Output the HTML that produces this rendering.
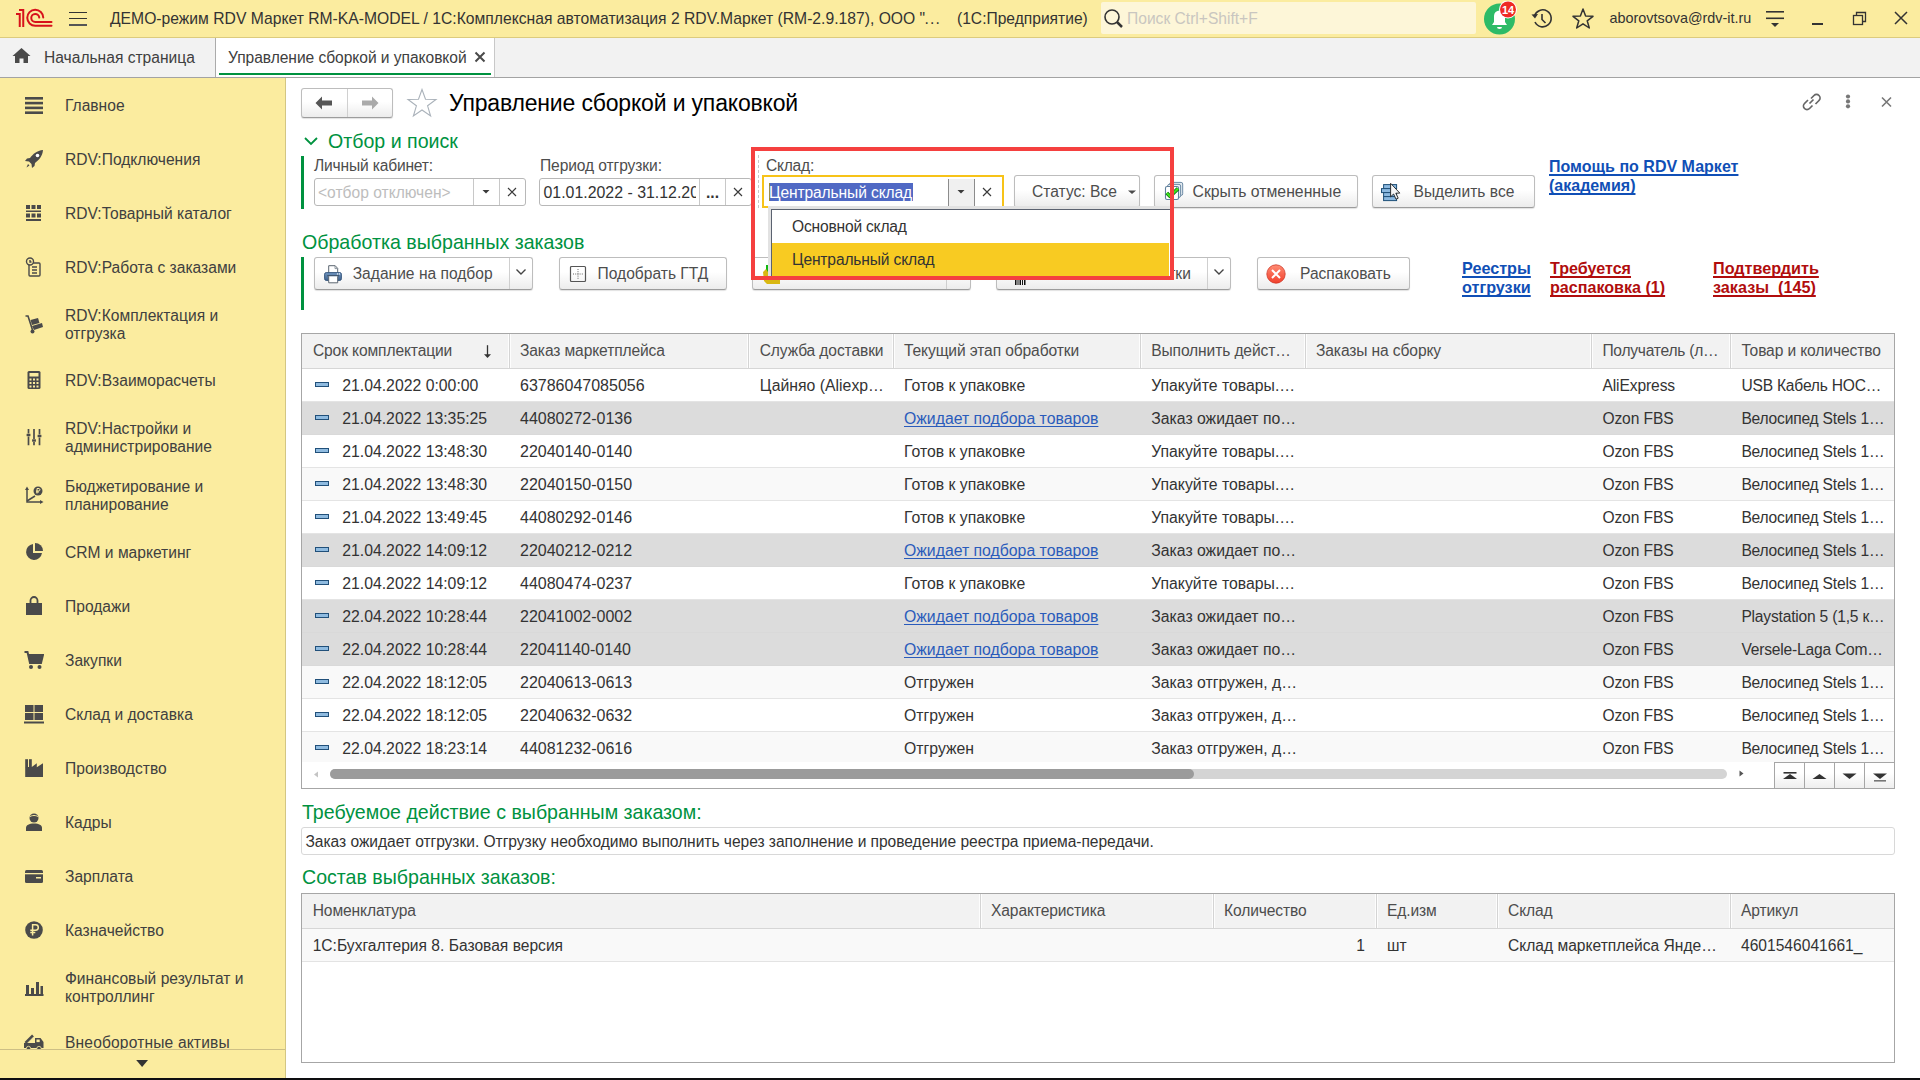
<!DOCTYPE html>
<html><head><meta charset="utf-8"><title>1C</title>
<style>
html,body{margin:0;padding:0;width:1920px;height:1080px;overflow:hidden;background:#fff;}
body{position:relative;font-family:"Liberation Sans",sans-serif;}
.t{position:absolute;white-space:pre;line-height:1;font-family:"Liberation Sans",sans-serif;}
.r{position:absolute;display:block;}
</style></head><body>
<div class="r" style="left:0px;top:0px;width:1920px;height:37px;background:#fbec9f"></div>
<div class="r" style="left:0px;top:37px;width:1920px;height:1px;background:#dccb7e"></div>
<svg class="r" style="left:12px;top:5px;" width="45" height="27" viewBox="0 0 45 27">
<g stroke="#d7121b" stroke-width="2" fill="none">
<path d="M4 9 H7.75 V22"/>
<path d="M7 5 H11.25 V22"/>
<path d="M31.25 12.6 A8 8 0 1 0 23.25 20.75 H39.5" stroke-linecap="round"/>
<path d="M27.25 12.6 A4 4 0 1 0 23.25 16.9 H39.5" stroke-linecap="round"/>
</g>
</svg>
<div class="r" style="left:69px;top:11.5px;width:18px;height:1.6px;background:#333"></div>
<div class="r" style="left:69px;top:17.7px;width:18px;height:1.6px;background:#333"></div>
<div class="r" style="left:69px;top:24px;width:18px;height:1.8px;background:#555"></div>
<div class="t " style="left:110px;top:11px;font-size:15.7px;color:#333;font-weight:normal;">ДЕМО-режим RDV Маркет RM-KA-MODEL / 1С:Комплексная автоматизация 2 RDV.Маркет (RM-2.9.187), ООО &quot;</div>
<div class="t " style="left:924.6px;top:11px;font-size:15.7px;color:#333;font-weight:normal;letter-spacing:1.05px;">...</div>
<div class="t " style="left:957px;top:11px;font-size:15.6px;color:#333;font-weight:normal;">(1С:Предприятие)</div>
<div class="r" style="left:1101px;top:2px;width:375px;height:32px;background:#fdf6d8;border-radius:2px"></div>
<svg class="r" style="left:1103px;top:8px;" width="22" height="22" viewBox="0 0 22 22"><circle cx="9" cy="9" r="7" stroke="#333" stroke-width="1.6" fill="none"/><path d="M14 14 L19 19" stroke="#333" stroke-width="2.5"/></svg>
<div class="t " style="left:1127px;top:11px;font-size:15.6px;color:#c9c6c0;font-weight:normal;">Поиск Ctrl+Shift+F</div>
<svg class="r" style="left:1482px;top:1px;" width="40" height="36" viewBox="0 0 40 36">
<circle cx="17.5" cy="18" r="15.5" fill="#2dbb67"/>
<path d="M10 24 L25 24 L23 21 L23 15 A5.5 5.5 0 0 0 12 15 L12 21 Z" fill="#fff"/>
<path d="M15 26 A2.5 2 0 0 0 20 26 Z" fill="#fff"/>
<circle cx="26" cy="8.5" r="9" fill="#fff"/>
<circle cx="26" cy="8.5" r="8" fill="#ee2a24"/>
<text x="26" y="12.5" font-family="Liberation Sans" font-size="11" font-weight="bold" fill="#fff" text-anchor="middle">14</text>
</svg>
<svg class="r" style="left:1530px;top:7px;" width="24" height="24" viewBox="0 0 24 24"><path d="M4.5 9 A8.5 8.5 0 1 1 5 15" stroke="#333" stroke-width="1.6" fill="none"/><path d="M1.5 7.5 L5 11.5 L8 7" fill="#333"/><path d="M12 7 V12.5 L15.5 16" stroke="#333" stroke-width="1.6" fill="none"/></svg>
<svg class="r" style="left:1571px;top:7px;" width="24" height="24" viewBox="0 0 24 24"><path d="M12 2 L14.6 9 L22 9.3 L16.2 13.8 L18.3 21 L12 16.8 L5.7 21 L7.8 13.8 L2 9.3 L9.4 9 Z" stroke="#333" stroke-width="1.5" fill="none" stroke-linejoin="round"/></svg>
<div class="t " style="left:1609.5px;top:11px;font-size:14.4px;color:#333;font-weight:normal;">aborovtsova@rdv-it.ru</div>
<svg class="r" style="left:1764px;top:8px;" width="22" height="22" viewBox="0 0 22 22"><rect x="2" y="3" width="18" height="1.6" fill="#333"/><rect x="2" y="9.5" width="18" height="1.6" fill="#333"/><path d="M7 15 H15 L11 19 Z" fill="#333"/></svg>
<div class="r" style="left:1812px;top:23px;width:11px;height:1.5px;background:#333"></div>
<svg class="r" style="left:1852px;top:11px;" width="16" height="16" viewBox="0 0 16 16"><rect x="1.5" y="4.5" width="9" height="9" stroke="#333" stroke-width="1.3" fill="none"/><path d="M4.5 4.5 V1.5 H13.5 V10.5 H10.5" stroke="#333" stroke-width="1.3" fill="none"/></svg>
<svg class="r" style="left:1893px;top:10px;" width="16" height="16" viewBox="0 0 16 16"><path d="M2 2 L14 14 M14 2 L2 14" stroke="#333" stroke-width="1.5"/></svg>
<div class="r" style="left:0px;top:38px;width:1920px;height:39px;background:#f2f2f2"></div>
<div class="r" style="left:0px;top:77px;width:1920px;height:1px;background:#a3a3a3"></div>
<svg class="r" style="left:11px;top:46px;" width="22" height="20" viewBox="0 0 22 20"><path d="M1.5 10 L10.5 2 L19.5 10 L17 10 L17 17 L12.5 17 L12.5 12.5 L8.5 12.5 L8.5 17 L4 17 L4 10 Z" fill="#4a4a4a"/></svg>
<div class="t " style="left:44px;top:50px;font-size:15.6px;color:#404040;font-weight:normal;">Начальная страница</div>
<div class="r" style="left:215px;top:38px;width:280px;height:39px;background:#fff;border-left:1px solid #ababab;border-right:1px solid #c8c8c8;box-sizing:border-box"></div>
<div class="r" style="left:219px;top:73px;width:272px;height:2px;background:#00923f"></div>
<div class="t " style="left:228px;top:50px;font-size:15.6px;color:#404040;font-weight:normal;letter-spacing:-0.05px;">Управление сборкой и упаковкой</div>
<svg class="r" style="left:474px;top:51px;" width="12" height="12" viewBox="0 0 12 12"><path d="M1.5 1.5 L10.5 10.5 M10.5 1.5 L1.5 10.5" stroke="#4a4a4a" stroke-width="2"/></svg>
<div class="r" style="left:0px;top:78px;width:285px;height:1000px;background:#fbec9f"></div>
<div class="r" style="left:285px;top:78px;width:1px;height:1000px;background:#d3c683"></div>
<div class="r" style="left:0px;top:1049px;width:285px;height:1px;background:#cdbf85"></div>
<svg class="r" style="left:135px;top:1059px;" width="16" height="10" viewBox="0 0 16 10"><path d="M1.2 1 H13 L7.1 8 Z" fill="#333"/></svg>
<div class="r" style="left:0px;top:1078px;width:1920px;height:2px;background:#0e0e10"></div>
<svg class="r" style="left:24px;top:95px;" width="20" height="20" viewBox="0 0 20 20"><rect x="1" y="2" width="18" height="2.6" fill="#4a4a4a"/><rect x="1" y="6.8" width="18" height="2.6" fill="#4a4a4a"/><rect x="1" y="11.6" width="18" height="2.6" fill="#4a4a4a"/><rect x="1" y="16.4" width="18" height="2.6" fill="#4a4a4a"/></svg>
<div class="t " style="left:65px;top:98px;font-size:15.6px;color:#404040;font-weight:normal;">Главное</div>
<svg class="r" style="left:24px;top:149px;" width="20" height="20" viewBox="0 0 20 20"><path d="M19 1 C13 1.5 9 5 6 9 L3 9.5 L1 12 L5 12.5 L7.5 15 L8 19 L10.5 17 L11 14 C15 11 18.5 7 19 1 Z" fill="#4a4a4a"/><circle cx="13.5" cy="6.5" r="1.8" fill="#fff"/><path d="M2.5 18.5 L4 15 L5.5 16.5 Z" fill="#4a4a4a"/></svg>
<div class="t " style="left:65px;top:152px;font-size:15.6px;color:#404040;font-weight:normal;">RDV:Подключения</div>
<svg class="r" style="left:24px;top:203px;" width="20" height="20" viewBox="0 0 20 20"><g fill="#4a4a4a"><rect x="2" y="2" width="4" height="4"/><rect x="7.5" y="2" width="4" height="4"/><rect x="13" y="2" width="4" height="4"/><rect x="2" y="7.5" width="15" height="1.5"/><rect x="2" y="10.5" width="4" height="4"/><rect x="7.5" y="10.5" width="4" height="4"/><rect x="13" y="10.5" width="4" height="4"/><rect x="2" y="16" width="15" height="2"/></g></svg>
<div class="t " style="left:65px;top:206px;font-size:15.6px;color:#404040;font-weight:normal;">RDV:Товарный каталог</div>
<svg class="r" style="left:24px;top:257px;" width="20" height="20" viewBox="0 0 20 20"><g stroke="#4a4a4a" stroke-width="1.4" fill="none"><rect x="5" y="6" width="11" height="13" rx="1"/><circle cx="6" cy="4.5" r="3.5" fill="#fbec9f"/><path d="M6 3 V5 H7.5"/><path d="M8 10 H13 M8 13 H13 M8 16 H13"/></g></svg>
<div class="t " style="left:65px;top:260px;font-size:15.6px;color:#404040;font-weight:normal;">RDV:Работа с заказами</div>
<svg class="r" style="left:24px;top:314px;" width="20" height="20" viewBox="0 0 20 20"><g fill="#4a4a4a"><path d="M1.5 2 L4 2 L8.5 16" stroke="#4a4a4a" stroke-width="1.6" fill="none"/><circle cx="8.5" cy="17.5" r="2"/><path d="M8 12 L18 9 L19 13 L10 16 Z"/><path d="M6.5 6 L14 4 L15.5 9 L8 11 Z"/></g></svg>
<div class="t " style="left:65px;top:308px;font-size:15.6px;color:#404040;font-weight:normal;">RDV:Комплектация и</div>
<div class="t " style="left:65px;top:326px;font-size:15.6px;color:#404040;font-weight:normal;">отгрузка</div>
<svg class="r" style="left:24px;top:370px;" width="20" height="20" viewBox="0 0 20 20"><g fill="#4a4a4a"><rect x="3.5" y="1" width="13" height="18" rx="1.5"/></g><g fill="#fbec9f"><rect x="5.5" y="3" width="9" height="3.5"/><rect x="5.5" y="8.5" width="2" height="2"/><rect x="9" y="8.5" width="2" height="2"/><rect x="12.5" y="8.5" width="2" height="2"/><rect x="5.5" y="12" width="2" height="2"/><rect x="9" y="12" width="2" height="2"/><rect x="12.5" y="12" width="2" height="2"/><rect x="5.5" y="15.5" width="2" height="2"/><rect x="9" y="15.5" width="2" height="2"/><rect x="12.5" y="15.5" width="2" height="2"/></g></svg>
<div class="t " style="left:65px;top:373px;font-size:15.6px;color:#404040;font-weight:normal;">RDV:Взаиморасчеты</div>
<svg class="r" style="left:24px;top:427px;" width="20" height="20" viewBox="0 0 20 20"><g stroke="#4a4a4a" stroke-width="1.7"><path d="M4.5 2 V6.5 M4.5 9.5 V18.3"/><path d="M10 2 V12 M10 15 V18.3"/><path d="M15.5 2 V7.5 M15.5 10.5 V18.3"/></g><g fill="#4a4a4a"><rect x="2.6" y="6.8" width="3.8" height="2.4"/><rect x="8.1" y="12.3" width="3.8" height="2.4"/><rect x="13.6" y="7.8" width="3.8" height="2.4"/></g></svg>
<div class="t " style="left:65px;top:421px;font-size:15.6px;color:#404040;font-weight:normal;">RDV:Настройки и</div>
<div class="t " style="left:65px;top:439px;font-size:15.6px;color:#404040;font-weight:normal;">администрирование</div>
<svg class="r" style="left:24px;top:485px;" width="20" height="20" viewBox="0 0 20 20"><g stroke="#4a4a4a" stroke-width="1.5" fill="none"><path d="M3 3 V17 H18"/><path d="M3 16 L11 11"/></g><path d="M1 5 L3 1.5 L5 5 Z M16 15 L19.5 17 L16 19 Z" fill="#4a4a4a"/><circle cx="14" cy="6" r="4.5" fill="#4a4a4a"/><path d="M13 3.5 V8.5 M13 3.5 H15 A1.3 1.3 0 0 1 15 6 H12 M12 7 H15" stroke="#fbec9f" stroke-width="1" fill="none"/></svg>
<div class="t " style="left:65px;top:479px;font-size:15.6px;color:#404040;font-weight:normal;">Бюджетирование и</div>
<div class="t " style="left:65px;top:497px;font-size:15.6px;color:#404040;font-weight:normal;">планирование</div>
<svg class="r" style="left:24px;top:542px;" width="20" height="20" viewBox="0 0 20 20"><path d="M9 2 A8 8 0 1 0 18 11 L9 11 Z" fill="#4a4a4a"/><path d="M11 1 A8 8 0 0 1 19 9 L11 9 Z" fill="#4a4a4a"/></svg>
<div class="t " style="left:65px;top:545px;font-size:15.6px;color:#404040;font-weight:normal;">CRM и маркетинг</div>
<svg class="r" style="left:24px;top:596px;" width="20" height="20" viewBox="0 0 20 20"><path d="M2 7 H18 V19 H2 Z" fill="#4a4a4a"/><path d="M6.5 9 V4.5 A3.5 3.5 0 0 1 13.5 4.5 V9" stroke="#4a4a4a" stroke-width="1.8" fill="none"/></svg>
<div class="t " style="left:65px;top:599px;font-size:15.6px;color:#404040;font-weight:normal;">Продажи</div>
<svg class="r" style="left:24px;top:650px;" width="20" height="20" viewBox="0 0 20 20"><path d="M0.5 2 H3.5 L6 13 H17 L19 5 H5" stroke="#4a4a4a" stroke-width="2" fill="none"/><path d="M4.5 5 H19 L17 12 H6 Z" fill="#4a4a4a"/><circle cx="7" cy="17" r="2" fill="#4a4a4a"/><circle cx="15.5" cy="17" r="2" fill="#4a4a4a"/></svg>
<div class="t " style="left:65px;top:653px;font-size:15.6px;color:#404040;font-weight:normal;">Закупки</div>
<svg class="r" style="left:24px;top:704px;" width="20" height="20" viewBox="0 0 20 20"><g fill="#4a4a4a"><rect x="1" y="1" width="8.5" height="7"/><rect x="10.5" y="1" width="8.5" height="7"/><rect x="1" y="9" width="8.5" height="7"/><rect x="10.5" y="9" width="8.5" height="7"/><rect x="0" y="17.5" width="20" height="2"/></g></svg>
<div class="t " style="left:65px;top:707px;font-size:15.6px;color:#404040;font-weight:normal;">Склад и доставка</div>
<svg class="r" style="left:24px;top:758px;" width="20" height="20" viewBox="0 0 20 20"><g fill="#4a4a4a"><rect x="1.2" y="1.2" width="2.8" height="8"/><rect x="5" y="1.2" width="2.8" height="8"/><path d="M1.2 9 H7.8 L12.8 5.2 V9.2 L19 5.2 V19 H1.2 Z"/></g></svg>
<div class="t " style="left:65px;top:761px;font-size:15.6px;color:#404040;font-weight:normal;">Производство</div>
<svg class="r" style="left:24px;top:812px;" width="20" height="20" viewBox="0 0 20 20"><circle cx="10" cy="6" r="4.5" fill="#4a4a4a"/><path d="M2 19 V16 C2 13 5 11.5 10 11.5 C15 11.5 18 13 18 16 V19 Z" fill="#4a4a4a"/><path d="M6 5 C7 3 13 3 14 5" stroke="#fbec9f" stroke-width="1" fill="none"/></svg>
<div class="t " style="left:65px;top:815px;font-size:15.6px;color:#404040;font-weight:normal;">Кадры</div>
<svg class="r" style="left:24px;top:866px;" width="20" height="20" viewBox="0 0 20 20"><rect x="1" y="4" width="18" height="13" rx="1.5" fill="#4a4a4a"/><rect x="1" y="7" width="18" height="1.3" fill="#fbec9f"/><rect x="12" y="11" width="5" height="1.5" fill="#fbec9f"/></svg>
<div class="t " style="left:65px;top:869px;font-size:15.6px;color:#404040;font-weight:normal;">Зарплата</div>
<svg class="r" style="left:24px;top:920px;" width="20" height="20" viewBox="0 0 20 20"><circle cx="10" cy="10" r="8.8" fill="#4a4a4a"/><path d="M8.6 15.5 V4.8 H11.6 A2.7 2.7 0 0 1 11.6 10.2 H6.3 M6.3 12.6 H11.3" stroke="#fbec9f" stroke-width="1.5" fill="none"/></svg>
<div class="t " style="left:65px;top:923px;font-size:15.6px;color:#404040;font-weight:normal;">Казначейство</div>
<svg class="r" style="left:24px;top:977px;" width="20" height="20" viewBox="0 0 20 20"><g fill="#4a4a4a"><rect x="2" y="8" width="3" height="9"/><rect x="7" y="11" width="3" height="6"/><rect x="12" y="5" width="3" height="12"/><rect x="16.5" y="9" width="2.5" height="8"/><rect x="1" y="17" width="18.5" height="2"/></g></svg>
<div class="t " style="left:65px;top:971px;font-size:15.6px;color:#404040;font-weight:normal;">Финансовый результат и</div>
<div class="t " style="left:65px;top:989px;font-size:15.6px;color:#404040;font-weight:normal;">контроллинг</div>
<div class="r" style="left:0;top:1030px;width:285px;height:19px;overflow:hidden">
<svg class="r" style="left:24px;top:2px;" width="20" height="20" viewBox="0 0 20 20"><path d="M1.5 11 L9 3.5" stroke="#4a4a4a" stroke-width="2.6"/><path d="M2.5 11.5 L9.5 4.5" stroke="#8a8a7a" stroke-width="0.8"/><path d="M0 11 H11 V6 H16.5 L19.5 10 V16 H0 Z" fill="#4a4a4a"/><rect x="12.5" y="7.5" width="3.2" height="2.6" fill="#fbec9f"/><circle cx="4.5" cy="16.5" r="2.2" fill="#4a4a4a" stroke="#fbec9f" stroke-width="0.8"/><circle cx="15" cy="16.5" r="2.2" fill="#4a4a4a" stroke="#fbec9f" stroke-width="0.8"/></svg>
<div class="t " style="left:65px;top:5px;font-size:15.6px;color:#404040;font-weight:normal;letter-spacing:0.15px;">Внеоборотные активы</div>
</div>
<div class="r" style="left:286px;top:78px;width:1634px;height:1000px;background:#fff"></div>
<div class="r" style="left:301px;top:88px;width:92px;height:30px;box-sizing:border-box;border:1px solid #bdbdbd;border-bottom-color:#9c9c9c;border-radius:3px;background:linear-gradient(#ffffff 0%,#ffffff 45%,#ececec 100%);box-shadow:0 1px 1px rgba(0,0,0,0.12);"></div>
<div class="r" style="left:347px;top:89px;width:1px;height:28px;background:#d0d0d0"></div>
<svg class="r" style="left:314px;top:95px;" width="20" height="16" viewBox="0 0 20 16"><path d="M1.5 8 L8 1.5 L8 5.5 L18 5.5 L18 10.5 L8 10.5 L8 14.5 Z" fill="#555"/></svg>
<svg class="r" style="left:360px;top:95px;" width="20" height="16" viewBox="0 0 20 16"><path d="M18.5 8 L12 1.5 L12 5.5 L2 5.5 L2 10.5 L12 10.5 L12 14.5 Z" fill="#aaa"/></svg>
<svg class="r" style="left:406px;top:88px;" width="32" height="30" viewBox="0 0 32 30"><path d="M16 1.5 L19.5 11.3 L30 11.5 L21.6 17.8 L24.6 28 L16 22 L7.4 28 L10.4 17.8 L2 11.5 L12.5 11.3 Z" stroke="#aab2ba" stroke-width="1.1" fill="none" stroke-linejoin="miter"/></svg>
<div class="t " style="left:449px;top:92px;font-size:23px;color:#000;font-weight:normal;letter-spacing:-0.17px;">Управление сборкой и упаковкой</div>
<svg class="r" style="left:1800px;top:91px;" width="23" height="22" viewBox="0 0 23 22"><path d="M9.5 12.5 L13.5 8.5" stroke="#666" stroke-width="1.7"/><path d="M8 9 L4.5 12.5 A3.3 3.3 0 0 0 9.5 17.5 L12.5 14.5" stroke="#666" stroke-width="1.7" fill="none"/><path d="M11 7.5 L14 4.5 A3.3 3.3 0 0 1 19 9.5 L15.5 13" stroke="#666" stroke-width="1.7" fill="none"/></svg>
<svg class="r" style="left:1844px;top:92px;" width="8" height="20" viewBox="0 0 8 20"><circle cx="4" cy="4.5" r="2.1" fill="#777"/><circle cx="4" cy="9.4" r="2.1" fill="#777"/><circle cx="4" cy="14.3" r="2.1" fill="#777"/></svg>
<svg class="r" style="left:1880px;top:95px;" width="14" height="14" viewBox="0 0 14 14"><path d="M2 2.5 L11 11.5 M11 2.5 L2 11.5" stroke="#777" stroke-width="1.6"/></svg>
<svg class="r" style="left:302px;top:134px;" width="18" height="14" viewBox="0 0 18 14"><path d="M3 4 L9 10 L15 4" stroke="#00923f" stroke-width="1.8" fill="none"/></svg>
<div class="t " style="left:328px;top:132px;font-size:19.6px;color:#00923f;font-weight:normal;transform:scaleY(1.07);transform-origin:0 16px;">Отбор и поиск</div>
<div class="r" style="left:301px;top:156px;width:3px;height:53px;background:#00923f"></div>
<div class="t " style="left:314px;top:158px;font-size:15.6px;color:#4d4d4d;font-weight:normal;letter-spacing:-0.18px;">Личный кабинет:</div>
<div class="r" style="left:314px;top:178px;width:212px;height:28px;box-sizing:border-box;border:1px solid #b8b8b8;border-radius:3px;background:#fff"></div>
<div class="r" style="left:473px;top:179px;width:1px;height:26px;background:#c8c8c8"></div>
<div class="r" style="left:499px;top:179px;width:1px;height:26px;background:#c8c8c8"></div>
<div class="t " style="left:318px;top:185px;font-size:15.6px;color:#bdbdbd;font-weight:normal;">&lt;отбор отключен&gt;</div>
<svg class="r" style="left:481px;top:189px;" width="10" height="6" viewBox="0 0 10 6"><path d="M1.5 1 H8.5 L5 4.5 Z" fill="#3a3a3a"/></svg>
<svg class="r" style="left:506px;top:186px;" width="12" height="12" viewBox="0 0 12 12"><path d="M2 2 L10 10 M10 2 L2 10" stroke="#3a3a3a" stroke-width="1.15"/></svg>
<div class="t " style="left:540px;top:158px;font-size:15.6px;color:#4d4d4d;font-weight:normal;letter-spacing:-0.1px;">Период отгрузки:</div>
<div class="r" style="left:539px;top:178px;width:213px;height:28px;box-sizing:border-box;border:1px solid #b8b8b8;border-radius:3px;background:#fff"></div>
<div class="r" style="left:699px;top:179px;width:1px;height:26px;background:#c8c8c8"></div>
<div class="r" style="left:725px;top:179px;width:1px;height:26px;background:#c8c8c8"></div>
<div class="r" style="left:542px;top:179px;width:154px;height:26px;overflow:hidden">
<div class="t " style="left:1.5px;top:6px;font-size:15.9px;color:#333;font-weight:normal;">01.01.2022 - 31.12.2022</div>
</div>
<div class="t " style="left:706px;top:185px;font-size:15.6px;color:#333;font-weight:bold;">...</div>
<svg class="r" style="left:732px;top:186px;" width="12" height="12" viewBox="0 0 12 12"><path d="M2 2 L10 10 M10 2 L2 10" stroke="#3a3a3a" stroke-width="1.15"/></svg>
<div class="r" style="left:758px;top:155px;width:1px;height:53px;background:repeating-linear-gradient(#c8c8c8 0 3px, transparent 3px 5px)"></div>
<div class="t " style="left:766px;top:158px;font-size:15.6px;color:#4d4d4d;font-weight:normal;letter-spacing:-0.25px;">Склад:</div>
<div class="r" style="left:762px;top:175px;width:242px;height:33px;box-sizing:border-box;border:2px solid #f7c318;background:#fff"></div>
<div class="r" style="left:948px;top:179px;width:27px;height:27px;background:#f0f0f0;border-left:1px solid #8c8c8c;border-right:1px solid #8c8c8c;box-sizing:border-box"></div>
<div class="r" style="left:769px;top:183px;width:144px;height:18px;background:#5069c4"></div>
<div class="r" style="left:769px;top:183px;width:1px;height:18px;background:#9a8a30"></div>
<div class="t " style="left:769px;top:185px;font-size:15.6px;color:#fff;font-weight:normal;letter-spacing:-0.12px;">Центральный склад</div>
<svg class="r" style="left:956px;top:189px;" width="10" height="6" viewBox="0 0 10 6"><path d="M1.5 1 H8.5 L5 4.5 Z" fill="#3a3a3a"/></svg>
<svg class="r" style="left:981px;top:186px;" width="12" height="12" viewBox="0 0 12 12"><path d="M2 2 L10 10 M10 2 L2 10" stroke="#3a3a3a" stroke-width="1.15"/></svg>
<div class="r" style="left:1014px;top:175px;width:126px;height:33px;box-sizing:border-box;border:1px solid #bdbdbd;border-bottom-color:#9c9c9c;border-radius:3px;background:linear-gradient(#ffffff 0%,#ffffff 45%,#ececec 100%);box-shadow:0 1px 1px rgba(0,0,0,0.12);"></div>
<div class="t " style="left:1032px;top:184px;font-size:15.6px;color:#4d4d4d;font-weight:normal;">Статус: Все</div>
<svg class="r" style="left:1127px;top:190px;" width="10" height="5" viewBox="0 0 10 5"><path d="M1 0.5 H9 L5 4 Z" fill="#4a4a4a"/></svg>
<div class="r" style="left:1154px;top:175px;width:204px;height:33px;box-sizing:border-box;border:1px solid #bdbdbd;border-bottom-color:#9c9c9c;border-radius:3px;background:linear-gradient(#ffffff 0%,#ffffff 45%,#ececec 100%);box-shadow:0 1px 1px rgba(0,0,0,0.12);"></div>
<svg class="r" style="left:1163px;top:180px;" width="22" height="22" viewBox="0 0 22 22"><rect x="6.7" y="2.4" width="13" height="13" rx="1.6" fill="#e2e9ef" stroke="#6d8ba5" stroke-width="1"/><rect x="4.6" y="4.4" width="13" height="13" rx="1.6" fill="#eef2f6" stroke="#6d8ba5" stroke-width="1"/><rect x="2.5" y="6.5" width="13" height="13" rx="1.6" fill="#fff" stroke="#5f7f9c" stroke-width="1.1"/><path d="M3.8 13 L7 16.3 L15 8.6" stroke="#0d6d10" stroke-width="3.8" fill="none" stroke-linejoin="round"/><path d="M3.8 13 L7 16.3 L15 8.6" stroke="#3fe11c" stroke-width="2.2" fill="none" stroke-linejoin="round"/></svg>
<div class="t " style="left:1192.5px;top:184px;font-size:15.8px;color:#4d4d4d;font-weight:normal;">Скрыть отмененные</div>
<div class="r" style="left:1372px;top:175px;width:163px;height:33px;box-sizing:border-box;border:1px solid #bdbdbd;border-bottom-color:#9c9c9c;border-radius:3px;background:linear-gradient(#ffffff 0%,#ffffff 45%,#ececec 100%);box-shadow:0 1px 1px rgba(0,0,0,0.12);"></div>
<svg class="r" style="left:1379px;top:180px;" width="24" height="24" viewBox="0 0 24 24"><g fill="#8cb9e0" stroke="#1d4f78" stroke-width="1"><rect x="4.6" y="4.6" width="13" height="4"/><rect x="2.5" y="8.6" width="10" height="4"/><rect x="4.6" y="12.6" width="13" height="4"/><rect x="4.6" y="16.6" width="13" height="4"/></g><path d="M11.6 3.3 L11.6 16.8 L14.6 14 L17 19.2 L19.2 18.2 L16.8 13.2 L20.8 13.1 Z" fill="#f6f6f6" stroke="#1e1e1e" stroke-width="0.9" stroke-linejoin="round"/></svg>
<div class="t " style="left:1413.5px;top:184px;font-size:15.6px;color:#4d4d4d;font-weight:normal;">Выделить все</div>
<div class="t " style="left:1549px;top:158px;font-size:16.05px;color:#104fb6;font-weight:bold;text-decoration:underline;text-decoration-skip-ink:none;text-decoration-thickness:2px;text-underline-offset:2px">Помощь по RDV Маркет</div>
<div class="t " style="left:1549px;top:177px;font-size:16.05px;color:#104fb6;font-weight:bold;text-decoration:underline;text-decoration-skip-ink:none;text-decoration-thickness:2px;text-underline-offset:2px">(академия)</div>
<div class="t " style="left:302px;top:233px;font-size:19.6px;color:#00923f;font-weight:normal;transform:scaleY(1.07);transform-origin:0 16px;">Обработка выбранных заказов</div>
<div class="r" style="left:301px;top:257px;width:3px;height:53px;background:#00923f"></div>
<div class="r" style="left:314px;top:257px;width:219px;height:33px;box-sizing:border-box;border:1px solid #bdbdbd;border-bottom-color:#9c9c9c;border-radius:3px;background:linear-gradient(#ffffff 0%,#ffffff 45%,#ececec 100%);box-shadow:0 1px 1px rgba(0,0,0,0.12);"></div>
<div class="r" style="left:509px;top:258px;width:1px;height:31px;background:#cfcfcf"></div>
<svg class="r" style="left:322px;top:263px;" width="22" height="22" viewBox="0 0 22 22"><defs><linearGradient id="pg" x1="0" y1="0" x2="0" y2="1"><stop offset="0" stop-color="#7196c0"/><stop offset="1" stop-color="#3f618b"/></linearGradient></defs><path d="M6.7 9.5 V2.7 H13.2 L15.7 5.4 V9.5" fill="#fff" stroke="#5c6670" stroke-width="1"/><path d="M13 2.8 V5.6 H15.6" fill="none" stroke="#7f8a95" stroke-width="0.9"/><rect x="2.6" y="9.6" width="16.8" height="7.8" rx="1.6" fill="url(#pg)" stroke="#2c4f78" stroke-width="0.9"/><rect x="5.2" y="12.2" width="12" height="1.1" fill="#3a4d62"/><circle cx="15.5" cy="10.9" r="0.7" fill="#fff"/><circle cx="17.5" cy="10.9" r="0.7" fill="#fff"/><path d="M6.7 13.3 V19.8 H15.7 V13.3" fill="#fff" stroke="#5c6670" stroke-width="1"/></svg>
<div class="t " style="left:352.7px;top:266px;font-size:15.6px;color:#4d4d4d;font-weight:normal;">Задание на подбор</div>
<svg class="r" style="left:515px;top:268px;" width="12" height="8" viewBox="0 0 12 8"><path d="M1.5 1.5 L6 6 L10.5 1.5" stroke="#444" stroke-width="1.4" fill="none"/></svg>
<div class="r" style="left:559px;top:257px;width:168px;height:33px;box-sizing:border-box;border:1px solid #bdbdbd;border-bottom-color:#9c9c9c;border-radius:3px;background:linear-gradient(#ffffff 0%,#ffffff 45%,#ececec 100%);box-shadow:0 1px 1px rgba(0,0,0,0.12);"></div>
<svg class="r" style="left:569px;top:265px;" width="18" height="18" viewBox="0 0 18 18"><rect x="1.5" y="1.5" width="15" height="15" rx="1" fill="none" stroke="#555" stroke-width="1.2"/><path d="M9 4 V14 M4 9 H14" stroke="#666" stroke-width="1" stroke-dasharray="1 1.2"/></svg>
<div class="t " style="left:597.5px;top:266px;font-size:15.6px;color:#4d4d4d;font-weight:normal;">Подобрать ГТД</div>
<div class="r" style="left:752px;top:257px;width:219px;height:33px;box-sizing:border-box;border:1px solid #bdbdbd;border-bottom-color:#9c9c9c;border-radius:3px;background:linear-gradient(#ffffff 0%,#ffffff 45%,#ececec 100%);box-shadow:0 1px 1px rgba(0,0,0,0.12);"></div>
<div class="r" style="left:946px;top:258px;width:1px;height:31px;background:#cfcfcf"></div>
<svg class="r" style="left:762px;top:262px;" width="22" height="24" viewBox="0 0 22 24"><rect x="4" y="3" width="2.4" height="9" fill="#11b811"/><path d="M1 10 L4 7 L6 10 V18 H18 V22 H5 L2 19 Z" fill="#d9b812"/></svg>
<div class="r" style="left:996px;top:257px;width:235px;height:33px;box-sizing:border-box;border:1px solid #bdbdbd;border-bottom-color:#9c9c9c;border-radius:3px;background:linear-gradient(#ffffff 0%,#ffffff 45%,#ececec 100%);box-shadow:0 1px 1px rgba(0,0,0,0.12);"></div>
<div class="r" style="left:1207px;top:258px;width:1px;height:31px;background:#cfcfcf"></div>
<svg class="r" style="left:1006px;top:270px;" width="22" height="16" viewBox="0 0 22 16"><path d="M1 1 L9 8 L1 8 Z" fill="#c9a53a"/><g fill="#111"><rect x="9" y="10" width="1.5" height="5"/><rect x="11.5" y="10" width="1" height="5"/><rect x="13.5" y="10" width="1.5" height="5"/><rect x="16" y="10" width="1" height="5"/><rect x="18" y="10" width="1.5" height="5"/></g></svg>
<div class="t " style="left:1126px;top:266px;font-size:15.6px;color:#4d4d4d;font-weight:normal;">Этикетки</div>
<svg class="r" style="left:1213px;top:268px;" width="12" height="8" viewBox="0 0 12 8"><path d="M1.5 1.5 L6 6 L10.5 1.5" stroke="#444" stroke-width="1.4" fill="none"/></svg>
<div class="r" style="left:1257px;top:257px;width:153px;height:33px;box-sizing:border-box;border:1px solid #bdbdbd;border-bottom-color:#9c9c9c;border-radius:3px;background:linear-gradient(#ffffff 0%,#ffffff 45%,#ececec 100%);box-shadow:0 1px 1px rgba(0,0,0,0.12);"></div>
<svg class="r" style="left:1265px;top:263px;" width="22" height="22" viewBox="0 0 22 22"><defs><linearGradient id="rg" x1="0" y1="0" x2="0" y2="1"><stop offset="0" stop-color="#ff8c74"/><stop offset="1" stop-color="#f2402c"/></linearGradient></defs><circle cx="11" cy="11" r="9.2" fill="url(#rg)" stroke="#cf3a2a" stroke-width="0.8"/><path d="M7 7 L15 15 M15 7 L7 15" stroke="#fff" stroke-width="2"/></svg>
<div class="t " style="left:1300px;top:266px;font-size:15.6px;color:#4d4d4d;font-weight:normal;">Распаковать</div>
<div class="t " style="left:1462px;top:260px;font-size:16.2px;color:#104fb6;font-weight:bold;text-decoration:underline;text-decoration-skip-ink:none;text-decoration-thickness:2px;text-underline-offset:2px">Реестры</div>
<div class="t " style="left:1462px;top:279px;font-size:16.2px;color:#104fb6;font-weight:bold;text-decoration:underline;text-decoration-skip-ink:none;text-decoration-thickness:2px;text-underline-offset:2px">отгрузки</div>
<div class="t " style="left:1550px;top:260px;font-size:16.1px;color:#b10d0d;font-weight:bold;text-decoration:underline;text-decoration-skip-ink:none;text-decoration-thickness:2px;text-underline-offset:2px">Требуется</div>
<div class="t " style="left:1550px;top:279px;font-size:16.1px;color:#b10d0d;font-weight:bold;text-decoration:underline;text-decoration-skip-ink:none;text-decoration-thickness:2px;text-underline-offset:2px">распаковка (1)</div>
<div class="t " style="left:1713px;top:260px;font-size:16.2px;color:#b10d0d;font-weight:bold;text-decoration:underline;text-decoration-skip-ink:none;text-decoration-thickness:2px;text-underline-offset:2px">Подтвердить</div>
<div class="t " style="left:1713px;top:279px;font-size:16.2px;color:#b10d0d;font-weight:bold;text-decoration:underline;text-decoration-skip-ink:none;text-decoration-thickness:2px;text-underline-offset:2px">заказы  (145)</div>
<div class="r" style="left:301px;top:333px;width:1594px;height:456px;box-sizing:border-box;border:1px solid #a6a6a6;background:#fff"></div>
<div class="r" style="left:302px;top:334px;width:1592px;height:34px;background:#f2f2f2"></div>
<div class="r" style="left:302px;top:368px;width:1592px;height:1px;background:#d6d6d6"></div>
<div class="r" style="left:508px;top:334px;width:1px;height:34px;background:#fdfdfd"></div>
<div class="r" style="left:509px;top:334px;width:1px;height:34px;background:#d4d4d4"></div>
<div class="r" style="left:510px;top:334px;width:1px;height:34px;background:#fdfdfd"></div>
<div class="r" style="left:747px;top:334px;width:1px;height:34px;background:#fdfdfd"></div>
<div class="r" style="left:748px;top:334px;width:1px;height:34px;background:#d4d4d4"></div>
<div class="r" style="left:749px;top:334px;width:1px;height:34px;background:#fdfdfd"></div>
<div class="r" style="left:892px;top:334px;width:1px;height:34px;background:#fdfdfd"></div>
<div class="r" style="left:893px;top:334px;width:1px;height:34px;background:#d4d4d4"></div>
<div class="r" style="left:894px;top:334px;width:1px;height:34px;background:#fdfdfd"></div>
<div class="r" style="left:1139px;top:334px;width:1px;height:34px;background:#fdfdfd"></div>
<div class="r" style="left:1140px;top:334px;width:1px;height:34px;background:#d4d4d4"></div>
<div class="r" style="left:1141px;top:334px;width:1px;height:34px;background:#fdfdfd"></div>
<div class="r" style="left:1304px;top:334px;width:1px;height:34px;background:#fdfdfd"></div>
<div class="r" style="left:1305px;top:334px;width:1px;height:34px;background:#d4d4d4"></div>
<div class="r" style="left:1306px;top:334px;width:1px;height:34px;background:#fdfdfd"></div>
<div class="r" style="left:1590px;top:334px;width:1px;height:34px;background:#fdfdfd"></div>
<div class="r" style="left:1591px;top:334px;width:1px;height:34px;background:#d4d4d4"></div>
<div class="r" style="left:1592px;top:334px;width:1px;height:34px;background:#fdfdfd"></div>
<div class="r" style="left:1729px;top:334px;width:1px;height:34px;background:#fdfdfd"></div>
<div class="r" style="left:1730px;top:334px;width:1px;height:34px;background:#d4d4d4"></div>
<div class="r" style="left:1731px;top:334px;width:1px;height:34px;background:#fdfdfd"></div>
<div class="t " style="left:312.9px;top:343px;font-size:15.6px;color:#4d4d4d;font-weight:normal;letter-spacing:-0.12px;">Срок комплектации</div>
<svg class="r" style="left:481px;top:344px;" width="14" height="16" viewBox="0 0 14 16"><path d="M6.5 1.2 V12" stroke="#333" stroke-width="1.3"/><path d="M3 10.2 L6.5 14 L10 10.2 Z" fill="#333"/></svg>
<div class="t " style="left:520px;top:343px;font-size:15.6px;color:#4d4d4d;font-weight:normal;letter-spacing:-0.12px;">Заказ маркетплейса</div>
<div class="t " style="left:759.7px;top:343px;font-size:15.6px;color:#4d4d4d;font-weight:normal;letter-spacing:-0.12px;">Служба доставки</div>
<div class="t " style="left:904px;top:343px;font-size:15.6px;color:#4d4d4d;font-weight:normal;letter-spacing:-0.12px;">Текущий этап обработки</div>
<div class="t " style="left:1151.2px;top:343px;font-size:15.6px;color:#4d4d4d;font-weight:normal;letter-spacing:-0.12px;">Выполнить дейст…</div>
<div class="t " style="left:1316px;top:343px;font-size:15.6px;color:#4d4d4d;font-weight:normal;letter-spacing:-0.12px;">Заказы на сборку</div>
<div class="t " style="left:1602.4px;top:343px;font-size:15.6px;color:#4d4d4d;font-weight:normal;letter-spacing:-0.25px;">Получатель (л…</div>
<div class="t " style="left:1741.4px;top:343px;font-size:15.6px;color:#4d4d4d;font-weight:normal;letter-spacing:-0.12px;">Товар и количество</div>
<div class="r" style="left:302px;top:369px;width:1592px;height:393px;overflow:hidden">
<div class="r" style="left:0px;top:0px;width:1592px;height:33px;background:#ffffff"></div>
<div class="r" style="left:0px;top:32px;width:1592px;height:1px;background:#e4e4e4"></div>
<div class="r" style="left:13px;top:13px;width:14px;height:5px;box-sizing:border-box;border:1px solid #21507a;background:#8fbbe0"></div>
<div class="t " style="left:40.19999999999999px;top:9px;font-size:15.8px;color:#333;font-weight:normal;">21.04.2022 0:00:00</div>
<div class="t " style="left:218px;top:9px;font-size:16.0px;color:#333;font-weight:normal;">63786047085056</div>
<div class="t " style="left:457.70000000000005px;top:9px;font-size:15.8px;color:#333;font-weight:normal;">Цайняо (Aliexp…</div>
<div class="t " style="left:602px;top:9px;font-size:15.8px;color:#333;font-weight:normal;">Готов к упаковке</div>
<div class="t " style="left:849.2px;top:9px;font-size:15.8px;color:#333;font-weight:normal;">Упакуйте товары.…</div>
<div class="t " style="left:1300.4px;top:9px;font-size:15.6px;color:#333;font-weight:normal;letter-spacing:-0.1px;">AliExpress</div>
<div class="t " style="left:1439.4px;top:9px;font-size:15.6px;color:#333;font-weight:normal;letter-spacing:-0.2px;">USB Кабель HOC…</div>
<div class="r" style="left:0px;top:33px;width:1592px;height:33px;background:#dcdcdc"></div>
<div class="r" style="left:0px;top:65px;width:1592px;height:1px;background:#d9d9d9"></div>
<div class="r" style="left:13px;top:46px;width:14px;height:5px;box-sizing:border-box;border:1px solid #21507a;background:#8fbbe0"></div>
<div class="t " style="left:40.19999999999999px;top:42px;font-size:15.8px;color:#333;font-weight:normal;">21.04.2022 13:35:25</div>
<div class="t " style="left:218px;top:42px;font-size:16.0px;color:#333;font-weight:normal;">44080272-0136</div>
<div class="t " style="left:602px;top:42px;font-size:15.8px;color:#2a5bbb;font-weight:normal;text-decoration:underline;text-decoration-skip-ink:none;text-decoration-thickness:1px;text-underline-offset:2px">Ожидает подбора товаров</div>
<div class="t " style="left:849.2px;top:42px;font-size:15.8px;color:#333;font-weight:normal;">Заказ ожидает по…</div>
<div class="t " style="left:1300.4px;top:42px;font-size:15.6px;color:#333;font-weight:normal;letter-spacing:-0.1px;">Ozon FBS</div>
<div class="t " style="left:1439.4px;top:42px;font-size:15.6px;color:#333;font-weight:normal;letter-spacing:-0.2px;">Велосипед Stels 1…</div>
<div class="r" style="left:0px;top:66px;width:1592px;height:33px;background:#ffffff"></div>
<div class="r" style="left:0px;top:98px;width:1592px;height:1px;background:#e4e4e4"></div>
<div class="r" style="left:13px;top:79px;width:14px;height:5px;box-sizing:border-box;border:1px solid #21507a;background:#8fbbe0"></div>
<div class="t " style="left:40.19999999999999px;top:75px;font-size:15.8px;color:#333;font-weight:normal;">21.04.2022 13:48:30</div>
<div class="t " style="left:218px;top:75px;font-size:16.0px;color:#333;font-weight:normal;">22040140-0140</div>
<div class="t " style="left:602px;top:75px;font-size:15.8px;color:#333;font-weight:normal;">Готов к упаковке</div>
<div class="t " style="left:849.2px;top:75px;font-size:15.8px;color:#333;font-weight:normal;">Упакуйте товары.…</div>
<div class="t " style="left:1300.4px;top:75px;font-size:15.6px;color:#333;font-weight:normal;letter-spacing:-0.1px;">Ozon FBS</div>
<div class="t " style="left:1439.4px;top:75px;font-size:15.6px;color:#333;font-weight:normal;letter-spacing:-0.2px;">Велосипед Stels 1…</div>
<div class="r" style="left:0px;top:99px;width:1592px;height:33px;background:#f9f9f9"></div>
<div class="r" style="left:0px;top:131px;width:1592px;height:1px;background:#e4e4e4"></div>
<div class="r" style="left:13px;top:112px;width:14px;height:5px;box-sizing:border-box;border:1px solid #21507a;background:#8fbbe0"></div>
<div class="t " style="left:40.19999999999999px;top:108px;font-size:15.8px;color:#333;font-weight:normal;">21.04.2022 13:48:30</div>
<div class="t " style="left:218px;top:108px;font-size:16.0px;color:#333;font-weight:normal;">22040150-0150</div>
<div class="t " style="left:602px;top:108px;font-size:15.8px;color:#333;font-weight:normal;">Готов к упаковке</div>
<div class="t " style="left:849.2px;top:108px;font-size:15.8px;color:#333;font-weight:normal;">Упакуйте товары.…</div>
<div class="t " style="left:1300.4px;top:108px;font-size:15.6px;color:#333;font-weight:normal;letter-spacing:-0.1px;">Ozon FBS</div>
<div class="t " style="left:1439.4px;top:108px;font-size:15.6px;color:#333;font-weight:normal;letter-spacing:-0.2px;">Велосипед Stels 1…</div>
<div class="r" style="left:0px;top:132px;width:1592px;height:33px;background:#ffffff"></div>
<div class="r" style="left:0px;top:164px;width:1592px;height:1px;background:#e4e4e4"></div>
<div class="r" style="left:13px;top:145px;width:14px;height:5px;box-sizing:border-box;border:1px solid #21507a;background:#8fbbe0"></div>
<div class="t " style="left:40.19999999999999px;top:141px;font-size:15.8px;color:#333;font-weight:normal;">21.04.2022 13:49:45</div>
<div class="t " style="left:218px;top:141px;font-size:16.0px;color:#333;font-weight:normal;">44080292-0146</div>
<div class="t " style="left:602px;top:141px;font-size:15.8px;color:#333;font-weight:normal;">Готов к упаковке</div>
<div class="t " style="left:849.2px;top:141px;font-size:15.8px;color:#333;font-weight:normal;">Упакуйте товары.…</div>
<div class="t " style="left:1300.4px;top:141px;font-size:15.6px;color:#333;font-weight:normal;letter-spacing:-0.1px;">Ozon FBS</div>
<div class="t " style="left:1439.4px;top:141px;font-size:15.6px;color:#333;font-weight:normal;letter-spacing:-0.2px;">Велосипед Stels 1…</div>
<div class="r" style="left:0px;top:165px;width:1592px;height:33px;background:#dcdcdc"></div>
<div class="r" style="left:0px;top:197px;width:1592px;height:1px;background:#d9d9d9"></div>
<div class="r" style="left:13px;top:178px;width:14px;height:5px;box-sizing:border-box;border:1px solid #21507a;background:#8fbbe0"></div>
<div class="t " style="left:40.19999999999999px;top:174px;font-size:15.8px;color:#333;font-weight:normal;">21.04.2022 14:09:12</div>
<div class="t " style="left:218px;top:174px;font-size:16.0px;color:#333;font-weight:normal;">22040212-0212</div>
<div class="t " style="left:602px;top:174px;font-size:15.8px;color:#2a5bbb;font-weight:normal;text-decoration:underline;text-decoration-skip-ink:none;text-decoration-thickness:1px;text-underline-offset:2px">Ожидает подбора товаров</div>
<div class="t " style="left:849.2px;top:174px;font-size:15.8px;color:#333;font-weight:normal;">Заказ ожидает по…</div>
<div class="t " style="left:1300.4px;top:174px;font-size:15.6px;color:#333;font-weight:normal;letter-spacing:-0.1px;">Ozon FBS</div>
<div class="t " style="left:1439.4px;top:174px;font-size:15.6px;color:#333;font-weight:normal;letter-spacing:-0.2px;">Велосипед Stels 1…</div>
<div class="r" style="left:0px;top:198px;width:1592px;height:33px;background:#ffffff"></div>
<div class="r" style="left:0px;top:230px;width:1592px;height:1px;background:#e4e4e4"></div>
<div class="r" style="left:13px;top:211px;width:14px;height:5px;box-sizing:border-box;border:1px solid #21507a;background:#8fbbe0"></div>
<div class="t " style="left:40.19999999999999px;top:207px;font-size:15.8px;color:#333;font-weight:normal;">21.04.2022 14:09:12</div>
<div class="t " style="left:218px;top:207px;font-size:16.0px;color:#333;font-weight:normal;">44080474-0237</div>
<div class="t " style="left:602px;top:207px;font-size:15.8px;color:#333;font-weight:normal;">Готов к упаковке</div>
<div class="t " style="left:849.2px;top:207px;font-size:15.8px;color:#333;font-weight:normal;">Упакуйте товары.…</div>
<div class="t " style="left:1300.4px;top:207px;font-size:15.6px;color:#333;font-weight:normal;letter-spacing:-0.1px;">Ozon FBS</div>
<div class="t " style="left:1439.4px;top:207px;font-size:15.6px;color:#333;font-weight:normal;letter-spacing:-0.2px;">Велосипед Stels 1…</div>
<div class="r" style="left:0px;top:231px;width:1592px;height:33px;background:#dcdcdc"></div>
<div class="r" style="left:0px;top:263px;width:1592px;height:1px;background:#d9d9d9"></div>
<div class="r" style="left:13px;top:244px;width:14px;height:5px;box-sizing:border-box;border:1px solid #21507a;background:#8fbbe0"></div>
<div class="t " style="left:40.19999999999999px;top:240px;font-size:15.8px;color:#333;font-weight:normal;">22.04.2022 10:28:44</div>
<div class="t " style="left:218px;top:240px;font-size:16.0px;color:#333;font-weight:normal;">22041002-0002</div>
<div class="t " style="left:602px;top:240px;font-size:15.8px;color:#2a5bbb;font-weight:normal;text-decoration:underline;text-decoration-skip-ink:none;text-decoration-thickness:1px;text-underline-offset:2px">Ожидает подбора товаров</div>
<div class="t " style="left:849.2px;top:240px;font-size:15.8px;color:#333;font-weight:normal;">Заказ ожидает по…</div>
<div class="t " style="left:1300.4px;top:240px;font-size:15.6px;color:#333;font-weight:normal;letter-spacing:-0.1px;">Ozon FBS</div>
<div class="t " style="left:1439.4px;top:240px;font-size:15.6px;color:#333;font-weight:normal;letter-spacing:-0.2px;">Playstation 5 (1,5 к…</div>
<div class="r" style="left:0px;top:264px;width:1592px;height:33px;background:#dcdcdc"></div>
<div class="r" style="left:0px;top:296px;width:1592px;height:1px;background:#d9d9d9"></div>
<div class="r" style="left:13px;top:277px;width:14px;height:5px;box-sizing:border-box;border:1px solid #21507a;background:#8fbbe0"></div>
<div class="t " style="left:40.19999999999999px;top:273px;font-size:15.8px;color:#333;font-weight:normal;">22.04.2022 10:28:44</div>
<div class="t " style="left:218px;top:273px;font-size:16.0px;color:#333;font-weight:normal;">22041140-0140</div>
<div class="t " style="left:602px;top:273px;font-size:15.8px;color:#2a5bbb;font-weight:normal;text-decoration:underline;text-decoration-skip-ink:none;text-decoration-thickness:1px;text-underline-offset:2px">Ожидает подбора товаров</div>
<div class="t " style="left:849.2px;top:273px;font-size:15.8px;color:#333;font-weight:normal;">Заказ ожидает по…</div>
<div class="t " style="left:1300.4px;top:273px;font-size:15.6px;color:#333;font-weight:normal;letter-spacing:-0.1px;">Ozon FBS</div>
<div class="t " style="left:1439.4px;top:273px;font-size:15.6px;color:#333;font-weight:normal;letter-spacing:-0.2px;">Versele-Laga Com…</div>
<div class="r" style="left:0px;top:297px;width:1592px;height:33px;background:#f9f9f9"></div>
<div class="r" style="left:0px;top:329px;width:1592px;height:1px;background:#e4e4e4"></div>
<div class="r" style="left:13px;top:310px;width:14px;height:5px;box-sizing:border-box;border:1px solid #21507a;background:#8fbbe0"></div>
<div class="t " style="left:40.19999999999999px;top:306px;font-size:15.8px;color:#333;font-weight:normal;">22.04.2022 18:12:05</div>
<div class="t " style="left:218px;top:306px;font-size:16.0px;color:#333;font-weight:normal;">22040613-0613</div>
<div class="t " style="left:602px;top:306px;font-size:15.8px;color:#333;font-weight:normal;">Отгружен</div>
<div class="t " style="left:849.2px;top:306px;font-size:15.8px;color:#333;font-weight:normal;">Заказ отгружен, д…</div>
<div class="t " style="left:1300.4px;top:306px;font-size:15.6px;color:#333;font-weight:normal;letter-spacing:-0.1px;">Ozon FBS</div>
<div class="t " style="left:1439.4px;top:306px;font-size:15.6px;color:#333;font-weight:normal;letter-spacing:-0.2px;">Велосипед Stels 1…</div>
<div class="r" style="left:0px;top:330px;width:1592px;height:33px;background:#ffffff"></div>
<div class="r" style="left:0px;top:362px;width:1592px;height:1px;background:#e4e4e4"></div>
<div class="r" style="left:13px;top:343px;width:14px;height:5px;box-sizing:border-box;border:1px solid #21507a;background:#8fbbe0"></div>
<div class="t " style="left:40.19999999999999px;top:339px;font-size:15.8px;color:#333;font-weight:normal;">22.04.2022 18:12:05</div>
<div class="t " style="left:218px;top:339px;font-size:16.0px;color:#333;font-weight:normal;">22040632-0632</div>
<div class="t " style="left:602px;top:339px;font-size:15.8px;color:#333;font-weight:normal;">Отгружен</div>
<div class="t " style="left:849.2px;top:339px;font-size:15.8px;color:#333;font-weight:normal;">Заказ отгружен, д…</div>
<div class="t " style="left:1300.4px;top:339px;font-size:15.6px;color:#333;font-weight:normal;letter-spacing:-0.1px;">Ozon FBS</div>
<div class="t " style="left:1439.4px;top:339px;font-size:15.6px;color:#333;font-weight:normal;letter-spacing:-0.2px;">Велосипед Stels 1…</div>
<div class="r" style="left:0px;top:363px;width:1592px;height:33px;background:#f9f9f9"></div>
<div class="r" style="left:0px;top:395px;width:1592px;height:1px;background:#e4e4e4"></div>
<div class="r" style="left:13px;top:376px;width:14px;height:5px;box-sizing:border-box;border:1px solid #21507a;background:#8fbbe0"></div>
<div class="t " style="left:40.19999999999999px;top:372px;font-size:15.8px;color:#333;font-weight:normal;">22.04.2022 18:23:14</div>
<div class="t " style="left:218px;top:372px;font-size:16.0px;color:#333;font-weight:normal;">44081232-0616</div>
<div class="t " style="left:602px;top:372px;font-size:15.8px;color:#333;font-weight:normal;">Отгружен</div>
<div class="t " style="left:849.2px;top:372px;font-size:15.8px;color:#333;font-weight:normal;">Заказ отгружен, д…</div>
<div class="t " style="left:1300.4px;top:372px;font-size:15.6px;color:#333;font-weight:normal;letter-spacing:-0.1px;">Ozon FBS</div>
<div class="t " style="left:1439.4px;top:372px;font-size:15.6px;color:#333;font-weight:normal;letter-spacing:-0.2px;">Велосипед Stels 1…</div>
</div>
<svg class="r" style="left:312px;top:770px;" width="8" height="9" viewBox="0 0 8 9"><path d="M6 1.5 V7.5 L2 4.5 Z" fill="#c4c4c4"/></svg>
<div class="r" style="left:330px;top:769px;width:1397px;height:10px;background:#d4d4d4;border-radius:5px"></div>
<div class="r" style="left:330px;top:769px;width:864px;height:10px;background:#9b9b9b;border-radius:5px"></div>
<svg class="r" style="left:1738px;top:769px;" width="8" height="9" viewBox="0 0 8 9"><path d="M1.5 1.5 V7.5 L5.5 4.5 Z" fill="#555"/></svg>
<div class="r" style="left:1774px;top:762px;width:120px;height:26px;box-sizing:border-box;border:1px solid #a6a6a6;border-right:none;border-bottom:none;background:linear-gradient(#ffffff 0%,#ffffff 40%,#eeeeee 100%)"></div>
<div class="r" style="left:1804px;top:763px;width:1px;height:25px;background:#a6a6a6"></div>
<div class="r" style="left:1834px;top:763px;width:1px;height:25px;background:#a6a6a6"></div>
<div class="r" style="left:1864px;top:763px;width:1px;height:25px;background:#a6a6a6"></div>
<svg class="r" style="left:1775px;top:763px;" width="29" height="25" viewBox="0 0 29 25"><rect x="8.5" y="9" width="13" height="1.6" fill="#333"/><path d="M8 16 L15 11 L22 16 Z" fill="#333"/></svg>
<svg class="r" style="left:1805px;top:763px;" width="29" height="25" viewBox="0 0 29 25"><path d="M7.5 16 L14.5 11 L21.5 16 Z" fill="#333"/></svg>
<svg class="r" style="left:1835px;top:763px;" width="29" height="25" viewBox="0 0 29 25"><path d="M7.5 10.5 L14.5 16 L21.5 10.5 Z" fill="#333"/></svg>
<svg class="r" style="left:1865px;top:763px;" width="29" height="25" viewBox="0 0 29 25"><path d="M8 10.5 L15 16 L22 10.5 Z" fill="#333"/><rect x="9" y="17" width="12" height="1.6" fill="#777"/></svg>
<div class="t " style="left:302px;top:803px;font-size:19.6px;color:#00923f;font-weight:normal;transform:scaleY(1.07);transform-origin:0 16px;">Требуемое действие с выбранным заказом:</div>
<div class="r" style="left:301px;top:827px;width:1594px;height:28px;box-sizing:border-box;border:1px solid #d8d8d8;border-radius:3px;background:#fff"></div>
<div class="t " style="left:305.5px;top:834px;font-size:15.6px;color:#333;font-weight:normal;letter-spacing:-0.045px;">Заказ ожидает отгрузки. Отгрузку необходимо выполнить через заполнение и проведение реестра приема-передачи.</div>
<div class="t " style="left:302px;top:868px;font-size:19.6px;color:#00923f;font-weight:normal;transform:scaleY(1.07);transform-origin:0 16px;">Состав выбранных заказов:</div>
<div class="r" style="left:301px;top:893px;width:1594px;height:170px;box-sizing:border-box;border:1px solid #a6a6a6;background:#fff"></div>
<div class="r" style="left:302px;top:894px;width:1592px;height:34px;background:#f2f2f2"></div>
<div class="r" style="left:302px;top:928px;width:1592px;height:1px;background:#d6d6d6"></div>
<div class="r" style="left:979px;top:894px;width:1px;height:34px;background:#fdfdfd"></div>
<div class="r" style="left:980px;top:894px;width:1px;height:34px;background:#d4d4d4"></div>
<div class="r" style="left:981px;top:894px;width:1px;height:34px;background:#fdfdfd"></div>
<div class="r" style="left:1212px;top:894px;width:1px;height:34px;background:#fdfdfd"></div>
<div class="r" style="left:1213px;top:894px;width:1px;height:34px;background:#d4d4d4"></div>
<div class="r" style="left:1214px;top:894px;width:1px;height:34px;background:#fdfdfd"></div>
<div class="r" style="left:1375px;top:894px;width:1px;height:34px;background:#fdfdfd"></div>
<div class="r" style="left:1376px;top:894px;width:1px;height:34px;background:#d4d4d4"></div>
<div class="r" style="left:1377px;top:894px;width:1px;height:34px;background:#fdfdfd"></div>
<div class="r" style="left:1496px;top:894px;width:1px;height:34px;background:#fdfdfd"></div>
<div class="r" style="left:1497px;top:894px;width:1px;height:34px;background:#d4d4d4"></div>
<div class="r" style="left:1498px;top:894px;width:1px;height:34px;background:#fdfdfd"></div>
<div class="r" style="left:1729px;top:894px;width:1px;height:34px;background:#fdfdfd"></div>
<div class="r" style="left:1730px;top:894px;width:1px;height:34px;background:#d4d4d4"></div>
<div class="r" style="left:1731px;top:894px;width:1px;height:34px;background:#fdfdfd"></div>
<div class="t " style="left:312.7px;top:903px;font-size:15.6px;color:#4d4d4d;font-weight:normal;letter-spacing:-0.12px;">Номенклатура</div>
<div class="t " style="left:991px;top:903px;font-size:15.6px;color:#4d4d4d;font-weight:normal;letter-spacing:-0.12px;">Характеристика</div>
<div class="t " style="left:1224px;top:903px;font-size:15.6px;color:#4d4d4d;font-weight:normal;letter-spacing:-0.12px;">Количество</div>
<div class="t " style="left:1387px;top:903px;font-size:15.6px;color:#4d4d4d;font-weight:normal;letter-spacing:-0.12px;">Ед.изм</div>
<div class="t " style="left:1508px;top:903px;font-size:15.6px;color:#4d4d4d;font-weight:normal;letter-spacing:-0.12px;">Склад</div>
<div class="t " style="left:1741px;top:903px;font-size:15.6px;color:#4d4d4d;font-weight:normal;letter-spacing:-0.12px;">Артикул</div>
<div class="r" style="left:302px;top:929px;width:1592px;height:32px;background:#f9f9f9"></div>
<div class="r" style="left:302px;top:961px;width:1592px;height:1px;background:#e3e3e3"></div>
<div class="t " style="left:312.7px;top:938px;font-size:15.6px;color:#333;font-weight:normal;">1С:Бухгалтерия 8. Базовая версия</div>
<div class="t" style="left:1265px;top:938px;width:100px;text-align:right;font-size:15.6px;color:#333">1</div>
<div class="t " style="left:1387px;top:938px;font-size:15.6px;color:#333;font-weight:normal;">шт</div>
<div class="t " style="left:1508px;top:938px;font-size:15.6px;color:#333;font-weight:normal;">Склад маркетплейса Янде…</div>
<div class="t " style="left:1741px;top:938px;font-size:15.6px;color:#333;font-weight:normal;">4601546041661_</div>
<div class="r" style="left:768px;top:206px;width:402px;height:71px;background:#e2e2e2"></div>
<div class="r" style="left:771px;top:209px;width:399px;height:68px;box-sizing:border-box;border-left:1px solid #5b6270;border-top:1px solid #5b6270;background:#fff"></div>
<div class="t " style="left:792px;top:219px;font-size:15.6px;color:#333;font-weight:normal;letter-spacing:-0.2px;">Основной склад</div>
<div class="r" style="left:772px;top:243px;width:397px;height:34px;background:#f8cb22"></div>
<div class="t " style="left:792px;top:252px;font-size:15.6px;color:#333;font-weight:normal;letter-spacing:-0.15px;">Центральный склад</div>
<div class="r" style="left:751px;top:147px;width:423px;height:133px;box-sizing:border-box;border:4px solid #f5403f"></div>
</body></html>
